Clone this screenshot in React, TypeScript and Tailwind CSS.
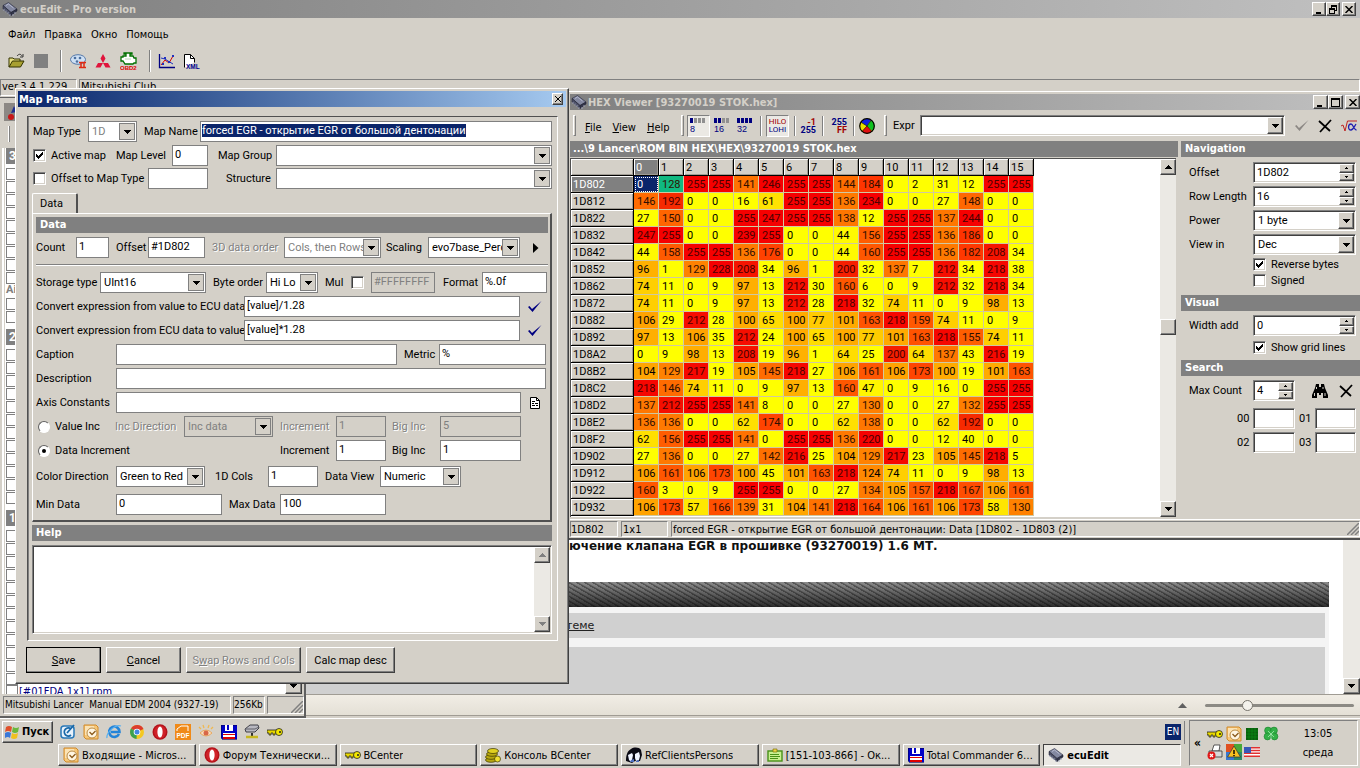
import { useEffect, useRef } from "react";
import type { ReactNode } from "react";

const raised =
  "border border-t-white border-l-white border-r-[#404040] border-b-[#404040] shadow-[inset_-1px_-1px_0_#808080] bg-[#d4d0c8]";
const sunken =
  "border border-t-[#808080] border-l-[#808080] border-r-white border-b-white shadow-[inset_1px_1px_0_#404040,inset_-1px_-1px_0_#d4d0c8] bg-white";
const cell =
  "border border-t-[#808080] border-l-[#808080] border-r-white border-b-white";
const tahoma = "font-['DejaVu_Sans_Condensed','DejaVu_Sans',sans-serif]";

/* ---------- small drawings ---------- */

function Down() {
  return (
    <svg width="7" height="4" viewBox="0 0 7 4" shapeRendering="crispEdges" aria-hidden="true">
      <path d="M0 0h7v1H0zM1 1h5v1H1zM2 2h3v1H2zM3 3h1v1H3z" />
    </svg>
  );
}

function Up() {
  return (
    <svg width="7" height="4" viewBox="0 0 7 4" shapeRendering="crispEdges" aria-hidden="true">
      <path d="M3 0h1v1H3zM2 1h3v1H2zM1 2h5v1H1zM0 3h7v1H0z" />
    </svg>
  );
}

function Chip() {
  return (
    <svg width="16" height="16" viewBox="0 0 16 16" aria-hidden="true">
      <path d="M1 4.500l5.500-3L15 8l-6 3.500z" fill="#8388a0" stroke="#26283c" strokeWidth=".6" />
      <path d="M1 4.500l8 7v3L1 8z" fill="#4c5068" stroke="#181a28" strokeWidth=".5" />
      <path d="M9 11.500L15 8v2l-6 4.500z" fill="#33364c" stroke="#181a28" strokeWidth=".5" />
      <path d="M2 8v2M4 9.500v2M6 11v2M8 13v2M11 13v2M13 11v2" stroke="#a4a8c0" strokeWidth=".9" />
      <path d="M4 4.500l2.500-1.500 5 4" fill="none" stroke="#c0c4d8" strokeWidth=".8" />
    </svg>
  );
}

function Floppy() {
  return (
    <svg width="16" height="16" viewBox="0 0 16 16" shapeRendering="crispEdges" aria-hidden="true">
      <path d="M0 1h16v14H1l-1-1z" fill="#0000c8" stroke="#000060" strokeWidth=".6" />
      <path d="M4 1h8v6H4z" fill="#fff" />
      <path d="M6 1h2v5H6z" fill="#0000c8" />
      <path d="M2 9h12v5H2z" fill="#fff" />
      <path d="M2 10h12v1H2zM2 13h12v2H2z" fill="#e00000" />
    </svg>
  );
}

function KeyIcon() {
  return (
    <svg width="16" height="16" viewBox="0 0 16 16" aria-hidden="true">
      <path d="M0 6h10v3H8v2H6V9H4v2H2V9H0z" fill="#e8d800" stroke="#222" strokeWidth=".8" />
      <circle cx="12" cy="8" r="3.500" fill="#f4e800" stroke="#222" strokeWidth=".8" />
      <circle cx="13" cy="8" r="1" fill="#222" />
    </svg>
  );
}

function OperaIcon() {
  return (
    <svg width="16" height="16" viewBox="0 0 16 16" aria-hidden="true">
      <ellipse cx="8" cy="8" rx="7.500" ry="7.800" fill="#b3121a" />
      <ellipse cx="8" cy="8" rx="6" ry="6.500" fill="#d02228" />
      <ellipse cx="8" cy="8" rx="2.600" ry="5.600" fill="#fff" />
    </svg>
  );
}

function OutlookIcon() {
  return (
    <svg width="16" height="16" viewBox="0 0 16 16" aria-hidden="true">
      <path d="M1 1h12l2 2v12H3l-2-2z" fill="#f6c778" stroke="#d18a2a" />
      <path d="M2 2h9v9H2z" fill="#fbe3b5" />
      <circle cx="9" cy="9" r="5" fill="#fff6e2" stroke="#b98a45" />
      <path d="M6.500 8l2.500 2.500L12.500 7" fill="none" stroke="#8a5a1c" strokeWidth="1.300" />
    </svg>
  );
}

function CheckTick({ color }: { color: string }) {
  return (
    <svg width="16" height="14" viewBox="0 0 16 14" aria-hidden="true">
      <path d="M1 7l1.500-1L5 9 14.500 1 5.500 12z" fill={color} />
    </svg>
  );
}

function Cross() {
  return (
    <svg width="14" height="14" viewBox="0 0 14 14" aria-hidden="true">
      <path d="M1 2l11 10M13 1L2 13" stroke="#000" strokeWidth="1.800" fill="none" />
    </svg>
  );
}

/* ---------- controls ---------- */

function Label({ w, id, off, children }: { w: string; id?: string; off?: boolean; children: ReactNode }) {
  return (
    <label
      htmlFor={id}
      className={`${w} shrink-0 whitespace-nowrap ${off ? "text-[#808080] [text-shadow:1px_1px_0_white]" : ""}`}
    >
      {children}
    </label>
  );
}

function Field({ w, id, value = "", off }: { w: string; id: string; value?: string; off?: boolean }) {
  return (
    <input
      id={id}
      defaultValue={value}
      disabled={off}
      aria-label={id}
      className={`${w} h-[21px] min-w-0 rounded-none border border-[#808080] pb-[3px] pl-[2px] outline-none ${
        off ? "bg-[#d4d0c8] text-[#808080]" : "bg-white"
      }`}
    />
  );
}

function Combo({ w, id, value = "", off, grey }: { w: string; id: string; value?: string; off?: boolean; grey?: boolean }) {
  return (
    <span className={`${w} flex h-[21px] items-center border border-[#808080] pr-[1px] ${grey ? "bg-[#d4d0c8]" : "bg-white"}`}>
      <select
        id={id}
        aria-label={id}
        disabled={off}
        className={`h-full min-w-0 flex-1 appearance-none pl-[3px] opacity-100 outline-none ${off ? "text-[#808080]" : ""}`}
      >
        <option>{value}</option>
      </select>
      <span className="flex h-[17px] w-[16px] shrink-0 items-center justify-center border border-[#808080] bg-[#d4d0c8]">
        <Down />
      </span>
    </span>
  );
}

function Check({ id, on }: { id: string; on?: boolean }) {
  return (
    <span className="grid h-[13px] w-[13px] shrink-0 place-items-center">
      <input
        id={id}
        aria-label={id}
        type="checkbox"
        defaultChecked={on}
        className={`peer col-start-1 row-start-1 h-[13px] w-[13px] appearance-none ${sunken}`}
      />
      <svg
        className="pointer-events-none col-start-1 row-start-1 hidden peer-checked:block"
        width="7"
        height="7"
        viewBox="0 0 7 7"
        shapeRendering="crispEdges"
      >
        <path d="M0 2h1v3H0zM1 3h1v3H1zM2 4h1v3H2zM3 3h1v3H3zM4 2h1v3H4zM5 1h1v3H5zM6 0h1v3H6z" />
      </svg>
    </span>
  );
}

function Radio({ id, on }: { id: string; on?: boolean }) {
  return (
    <span className="ml-[2px] mr-[5px] grid h-[12px] w-[12px] shrink-0 place-items-center">
      <input
        id={id}
        type="radio"
        name="increment"
        defaultChecked={on}
        className="peer col-start-1 row-start-1 h-[12px] w-[12px] appearance-none rounded-full border border-b-white border-l-[#606060] border-r-white border-t-[#606060] bg-white"
      />
      <span className="pointer-events-none col-start-1 row-start-1 hidden h-[4px] w-[4px] rounded-full bg-black peer-checked:block" />
    </span>
  );
}

function Spinner({ id, value, w }: { id: string; value: string; w: string }) {
  return (
    <span className={`${w} ${sunken} flex h-[21px] min-w-0 p-[1px]`}>
      <input id={id} defaultValue={value} className="w-0 min-w-0 flex-1 pb-[1px] pl-[2px] outline-none" />
      <span className="flex w-[15px] shrink-0 flex-col">
        <button aria-label="Up" className={`flex flex-1 items-center justify-center ${raised}`}>
          <svg width="3" height="2" viewBox="0 0 3 2" shapeRendering="crispEdges"><path d="M1 0h1v1H1zM0 1h3v1H0z" /></svg>
        </button>
        <button aria-label="Down" className={`flex flex-1 items-center justify-center ${raised}`}>
          <svg width="3" height="2" viewBox="0 0 3 2" shapeRendering="crispEdges"><path d="M0 0h3v1H0zM1 1h1v1H1z" /></svg>
        </button>
      </span>
    </span>
  );
}

function DropDown({ id, value, w }: { id: string; value: string; w: string }) {
  return (
    <span className={`${w} ${sunken} flex h-[21px] min-w-0 p-[1px]`}>
      <select id={id} aria-label={id} className="min-w-0 flex-1 appearance-none pl-[3px] outline-none">
        <option>{value}</option>
      </select>
      <span className={`flex w-[16px] shrink-0 items-center justify-center ${raised}`}>
        <Down />
      </span>
    </span>
  );
}

function WindowButtons() {
  const b = `flex h-[14px] w-[15px] items-center justify-center ${raised}`;
  return (
    <div className="flex">
      <button aria-label="Minimize" className={b}>
        <svg width="9" height="9" viewBox="0 0 9 9" shapeRendering="crispEdges"><path d="M1 7h5v2H1z" /></svg>
      </button>
      <button aria-label="Maximize" className={b}>
        <svg width="9" height="9" viewBox="0 0 9 9" shapeRendering="crispEdges"><path d="M0 0h9v9H0zM1 2v6h7V2z" fillRule="evenodd" /></svg>
      </button>
      <button aria-label="Close" className={`${b} ml-[2px]`}>
        <svg width="8" height="7" viewBox="0 0 8 7"><path d="M.5 0l7 7M7.500 0l-7 7" stroke="#000" strokeWidth="1.500" /></svg>
      </button>
    </div>
  );
}

function RestoreButtons() {
  const b = `flex h-[14px] w-[14px] items-center justify-center ${raised}`;
  return (
    <div className="flex">
      <button aria-label="Minimize" className={b}>
        <svg width="9" height="9" viewBox="0 0 9 9" shapeRendering="crispEdges"><path d="M1 7h5v2H1z" /></svg>
      </button>
      <button aria-label="Restore" className={b}>
        <svg width="9" height="9" viewBox="0 0 9 9" shapeRendering="crispEdges">
          <path d="M2 0h6v6H6V5h1V2H3v1H2zM0 3h6v6H0zM1 5v3h4V5z" fillRule="evenodd" />
        </svg>
      </button>
      <button aria-label="Close" className={`${b} ml-[2px]`}>
        <svg width="8" height="7" viewBox="0 0 8 7"><path d="M.5 0l7 7M7.500 0l-7 7" stroke="#000" strokeWidth="1.500" /></svg>
      </button>
    </div>
  );
}

function Bar({ children, pad = "pl-[4px]" }: { children: ReactNode; pad?: string }) {
  return <h2 className={`h-[16px] bg-[#808080] text-[11px] font-bold leading-[16px] text-white ${pad} ${tahoma}`}>{children}</h2>;
}

/* ---------- main window ---------- */

function MainWindow() {
  const sep = "h-[22px] w-[2px] border-l border-[#808080] border-r border-r-white";
  return (
    <header className="h-[97px] shrink-0 overflow-hidden">
      <div className="flex h-[18px] items-center bg-linear-to-r from-[#808080] to-[#c0c0c0] pl-[2px] pr-[4px]">
        <Chip />
        <h1 className={`flex-1 pl-[2px] text-[11px] font-bold text-[#d4d0c8] ${tahoma}`}>ecuEdit - Pro version</h1>
        <RestoreButtons />
      </div>
      <nav className={`mt-[7px] flex h-[18px] items-center gap-[9px] pl-[8px] ${tahoma}`}>
        <button>Файл</button>
        <button>Правка</button>
        <button>Окно</button>
        <button>Помощь</button>
      </nav>
      <div className="mt-[5px] flex h-[26px] items-center pl-[8px]">
        <button aria-label="Open" className="w-[26px]">
          <svg width="17" height="16" viewBox="0 0 17 16">
            <path d="M1 14V5h4l1 1h6v3" fill="#e8e080" stroke="#333300" />
            <path d="M1 14l3.500-6H16l-3.500 6z" fill="#a8a030" stroke="#333300" />
            <path d="M9 3c2-2.500 4-2 5 0m1-2v3h-3" fill="none" stroke="#222" strokeWidth=".9" />
          </svg>
        </button>
        <button aria-label="Stop" className="h-[14px] w-[14px] bg-[#808080]" />
        <span className={`ml-[12px] ${sep}`} />
        <button aria-label="ECU" className="ml-[8px] w-[25px]">
          <svg width="17" height="16" viewBox="0 0 17 16">
            <ellipse cx="8" cy="6.500" rx="7.500" ry="4.800" fill="#cfe0f4" stroke="#5478a8" />
            <circle cx="5" cy="5" r="1.300" fill="#4a6ea0" /><circle cx="10" cy="5" r="1.300" fill="#4a6ea0" /><circle cx="7" cy="8.500" r="1.300" fill="#4a6ea0" />
            <path d="M9 9.500h7M9 14.500h7M11 9.500v5M14 9.500v5" stroke="#e02810" strokeWidth="1.500" />
          </svg>
        </button>
        <button aria-label="Mitsubishi" className="w-[25px]">
          <svg width="16" height="16" viewBox="0 0 16 16">
            <path d="M8 1l2.500 4.500L8 10 5.500 5.500zM8 10l-2.500 4.500H.500L3 10zM8 10l2.500 4.500h5L13 10z" fill="#e0143c" />
          </svg>
        </button>
        <button aria-label="OBD 2" className="w-[17px]">
          <svg width="17" height="18" viewBox="0 0 17 18">
            <path d="M3 4h3V2H4V1h8v1h-2v2h3l1 2h2v5h-2l-1 1H5L3 9H1V5h2z" fill="#fff" stroke="#007000" strokeWidth="1.300" />
            <path d="M5 7h6" stroke="#b8d8b8" />
            <text x="0" y="18" fontSize="6" fontWeight="bold" fill="#e00000" fontFamily="Liberation Sans">OBD2</text>
          </svg>
        </button>
        <span className={`ml-[12px] ${sep}`} />
        <button aria-label="Chart" className="ml-[7px] w-[25px]">
          <svg width="17" height="16" viewBox="0 0 17 16">
            <path d="M1.500 1v13.500H17" fill="none" stroke="#000080" strokeWidth="1.300" />
            <path d="M3 12l4-5 4 3 4-7" fill="none" stroke="#d00000" />
            <path d="M3 5l4 1 3 2 5 3" fill="none" stroke="#2030c0" />
            <path d="M6 4h2v2H6zM10 8h2v2h-2zM14 2h2v2h-2zM4 10h2v2H4z" fill="#2030c0" />
          </svg>
        </button>
        <button aria-label="XML">
          <svg width="17" height="17" viewBox="0 0 17 17">
            <path d="M1.500 14.500v-13h6l4 4v4" fill="#fff" stroke="#000" />
            <path d="M2 2h5v4h4v4H4v4H2z" fill="#fff" />
            <path d="M7.500 1.500v4h4" fill="none" stroke="#000" />
            <text x="3" y="16" fontSize="6.500" fontWeight="bold" fill="#000090" fontFamily="Liberation Sans">XML</text>
          </svg>
        </button>
      </div>
      <div className={`mt-[5px] flex h-[17px] gap-[2px] ${tahoma}`}>
        <span className={`${cell} w-[77px] pl-[1px]`}>ver.3.4.1.229</span>
        <span className={`${cell} flex-1 pl-[1px]`}>Mitsubishi Club</span>
      </div>
    </header>
  );
}

/* ---------- list of maps ---------- */

function Boxes({ n, from }: { n: number; from: string }) {
  return (
    <>
      {Array.from({ length: n }, (_, i) => (
        <div key={i} className="flex h-[13px] shrink-0 items-center">
          <input type="checkbox" aria-label={`${from} ${i + 1}`} className="h-[12px] w-[12px] appearance-none border border-[#808080] bg-white" />
        </div>
      ))}
    </>
  );
}

function ListHeader({ children }: { children: ReactNode }) {
  return <div className="mb-[3px] h-[16px] shrink-0 bg-[#808080] pl-[3px] text-[12px] font-bold leading-[16px] text-white">{children}</div>;
}

function ListWindow() {
  return (
    <section className="flex w-[306px] shrink-0 flex-col border-r-2 border-r-[#606060] border-b-2 border-b-[#606060] border-t border-t-[#606060] bg-[#d4d0c8]">
      <div className="ml-[4px] mt-[5px] flex h-[45px] flex-col">
        <button aria-label="Colors" className="h-[18px] w-[24px] bg-[#8c8884] pl-[3px] pt-[1px]">
          <svg width="16" height="16" viewBox="0 0 16 16">
            <path d="M7 1l3 6-6 1z" fill="#203090" />
            <circle cx="4" cy="12" r="3" fill="#c81818" />
          </svg>
        </button>
        <span className="ml-[4px] mt-[5px] h-[16px] w-[2px] border-l border-white border-r border-r-[#808080]" />
      </div>
      <div className="ml-[2px] mr-[2px] flex min-h-0 flex-1 basis-0 border-l-2 border-white">
        <div className="ml-[1px] flex min-h-0 flex-1 flex-col overflow-hidden bg-white pl-[1px]">
          <ListHeader>3</ListHeader>
          <Boxes n={9} from="Group 3" />
          <div className="h-[13px] shrink-0 text-[11px] font-bold leading-[12px] text-[#808080]">Ai</div>
          <Boxes n={2} from="Air" />
          <div className="h-[6px] shrink-0" />
          <ListHeader>2</ListHeader>
          <Boxes n={12} from="Group 2" />
          <div className="h-[6px] shrink-0" />
          <ListHeader>1</ListHeader>
          <Boxes n={12} from="Group 1" />
          <label className="flex h-[13px] shrink-0 items-start text-[#000080]">
            <input type="checkbox" className="h-[12px] w-[12px] appearance-none border border-[#808080] bg-white" />
            <span className={`pl-[1px] ${tahoma}`}>[#01FDA 1x1] rpm</span>
          </label>
        </div>
        <div className="flex w-[17px] flex-col justify-end bg-[#ebe9e4]">
          <button aria-label="Scroll down" className={`flex h-[16px] items-center justify-center ${raised}`}><Down /></button>
        </div>
      </div>
      <footer className={`mt-[2px] flex h-[20px] shrink-0 gap-[2px] pb-[2px] pl-[3px] text-[10px] leading-[16px] ${tahoma}`}>
        <span className={`${cell} w-[228px] whitespace-pre pl-[1px]`}>Mitsubishi Lancer  Manual EDM 2004 (9327-19)</span>
        <span className={`${cell} w-[32px]`}>256Kb</span>
        <span className={`${cell} flex flex-1 items-end justify-end`}>
          <svg width="12" height="12" viewBox="0 0 12 12"><path d="M0 12L12 0M4 12l8-8M8 12l4-4" stroke="#808080" strokeWidth="1.500" /></svg>
        </span>
      </footer>
    </section>
  );
}

/* ---------- browser behind ---------- */

function Browser() {
  return (
    <section className="flex min-w-0 flex-1 flex-col justify-end bg-[#d4d0c8]">
      <div className="flex h-[154px] bg-white">
        <div className="flex min-w-0 flex-1 flex-col">
          <h2 className="h-[42px] pl-[263px] text-[12px] font-bold leading-[13px] text-[#111] font-['DejaVu_Sans',sans-serif]">
            ючение клапана EGR в прошивке (93270019) 1.6 МТ.
          </h2>
          <div className="mr-[14px] h-[25px] bg-[repeating-linear-gradient(30deg,rgba(0,0,0,.35)_0px,rgba(0,0,0,.35)_1px,transparent_2px,transparent_4px),linear-gradient(#8c8c8c,#2c2c2c)]" />
          <div className="mr-[14px] flex flex-1 flex-col gap-[9px] bg-[#f4f4f4] pr-[4px] pt-[6px]">
            <div className="h-[25px] bg-[#d0d0d0] pl-[260px] leading-[26px]">
              <a href="#theme" className="text-[11px] text-[#222] underline font-['DejaVu_Sans',sans-serif]">теме</a>
            </div>
            <div className="flex-1 bg-[#d0d0d0]" />
          </div>
        </div>
        <div className="flex w-[17px] flex-col justify-end bg-[#ebe9e4]">
          <button aria-label="Scroll down" className={`flex h-[16px] items-center justify-center ${raised}`}><Down /></button>
        </div>
      </div>
      <div className="flex h-[22px] items-center justify-end gap-[18px] border-y border-[#a09c94] bg-linear-to-b from-[#f1ede5] to-[#e4e0d6] pr-[6px]">
        <svg width="9" height="5" viewBox="0 0 9 5"><path d="M4.500 0L9 5H0z" fill="#606060" /></svg>
        <input
          type="range"
          aria-label="Zoom"
          defaultValue={27}
          className="h-[14px] w-[149px] appearance-none bg-transparent [&::-webkit-slider-runnable-track]:h-[3px] [&::-webkit-slider-runnable-track]:rounded [&::-webkit-slider-runnable-track]:bg-[#8c8a84] [&::-webkit-slider-thumb]:-mt-[4px] [&::-webkit-slider-thumb]:h-[11px] [&::-webkit-slider-thumb]:w-[11px] [&::-webkit-slider-thumb]:appearance-none [&::-webkit-slider-thumb]:rounded-full [&::-webkit-slider-thumb]:border [&::-webkit-slider-thumb]:border-[#77746c] [&::-webkit-slider-thumb]:bg-[#f4f2ec]"
        />
      </div>
      <div className="h-[2px]" />
    </section>
  );
}

/* ---------- Map Params dialog ---------- */

const row = "flex h-[21px] items-center";

function MapParams() {
  const name = useRef<HTMLInputElement>(null);
  useEffect(() => {
    name.current?.focus();
    name.current?.select();
  }, []);
  const btn = `h-[26px] ${raised}`;
  return (
    <section className={`absolute left-[15px] top-[88px] w-[554px] p-[2px] pb-[10px] ${raised}`}>
      <div className="flex h-[16px] items-center bg-linear-to-r from-[#0a246a] to-[#a6caf0] pl-[1px] pr-[3px]">
        <h2 className={`flex-1 text-[11px] font-bold text-white ${tahoma}`}>Map Params</h2>
        <button aria-label="Close" className={`flex h-[12px] w-[11px] items-center justify-center ${raised}`}>
          <svg width="6" height="6" viewBox="0 0 6 6"><path d="M0 0l6 6M6 0L0 6" stroke="#000" /></svg>
        </button>
      </div>
      <div className="ml-[9px] mr-[8px] mt-[9px] border border-b-white border-l-[#505050] border-r-white border-t-[#505050] pb-[6px] pl-[4px] pr-[5px] pt-[4px] shadow-[inset_1px_0_0_#808080]">
        <div className={`${row} pl-[1px]`}>
          <Label w="w-[55px]" id="map-type">Map Type</Label>
          <Combo w="w-[49px]" id="map-type" value="1D" off />
          <Label w="ml-[7px] w-[56px]" id="map-name">Map Name</Label>
          <input
            id="map-name"
            ref={name}
            defaultValue="forced EGR - открытие EGR от большой дентонации"
            className="h-[21px] min-w-0 flex-1 border border-[#808080] bg-white pb-[3px] pl-[1px] outline-none selection:bg-[#0a246a] selection:text-white"
          />
        </div>
        <div className={`${row} mt-[3px] pl-[1px]`}>
          <Check id="active-map" on />
          <Label w="ml-[5px] w-[65px]" id="active-map">Active map</Label>
          <Label w="w-[56px]" id="map-level">Map Level</Label>
          <Field w="w-[36px]" id="map-level" value="0" />
          <Label w="ml-[10px] w-[58px]" id="map-group">Map Group</Label>
          <Combo w="flex-1" id="map-group" />
        </div>
        <div className={`${row} mt-[2px] pl-[1px]`}>
          <Check id="offset-type" />
          <Label w="ml-[5px] w-[97px]" id="offset-type">Offset to Map Type</Label>
          <Field w="w-[60px]" id="offset-to" />
          <Label w="ml-[18px] w-[50px]" id="structure">Structure</Label>
          <Combo w="flex-1" id="structure" />
        </div>
        <div role="tablist" className="mt-[4px] flex">
          <button role="tab" aria-selected="true" className="h-[20px] w-[46px] rounded-t-[2px] border border-b-0 border-l-white border-r-2 border-r-[#505050] border-t-white pr-[6px]">
            Data
          </button>
        </div>
        <div className="border border-b-2 border-b-[#505050] border-l-white border-r-2 border-r-[#505050] border-t-white pb-[5px] pl-[3px] pr-[2px] pt-[3px]">
          <Bar>Data</Bar>
          <div className={`${row} mt-[4px]`}>
            <Label w="w-[40px]" id="count">Count</Label>
            <Field w="w-[33px]" id="count" value="1" />
            <Label w="ml-[7px] w-[32px]" id="offset">Offset</Label>
            <Field w="w-[57px]" id="offset" value="#1D802" />
            <Label w="ml-[7px] w-[72px]" id="order3d" off>3D data order</Label>
            <Combo w="w-[97px]" id="order3d" value="Cols, then Rows" off />
            <Label w="ml-[5px] w-[42px]" id="scaling">Scaling</Label>
            <Combo w="w-[92px]" id="scaling" value="evo7base_Percent" />
            <button aria-label="Open scaling" className="ml-[13px]">
              <svg width="6" height="10" viewBox="0 0 6 10"><path d="M0 0l5.500 5L0 10z" /></svg>
            </button>
          </div>
          <div className="mb-[6px] mt-[6px] h-[2px] border-b border-t border-b-white border-t-[#808080]" />
          <div className={row}>
            <Label w="w-[64px]" id="storage">Storage type</Label>
            <Combo w="w-[106px]" id="storage" value="UInt16" />
            <Label w="ml-[7px] w-[53px]" id="byte-order">Byte order</Label>
            <Combo w="w-[52px]" id="byte-order" value="Hi Lo" />
            <Label w="ml-[7px] w-[26px]" id="mul">Mul</Label>
            <Check id="mul" />
            <span className="w-[7px]" />
            <Field w="w-[64px]" id="mask" value="#FFFFFFFF" off />
            <Label w="ml-[8px] w-[39px]" id="format">Format</Label>
            <Field w="w-[65px]" id="format" value="%.0f" />
          </div>
          <div className={`${row} mt-[3px]`}>
            <Label w="w-[208px]" id="to-ecu">Convert expression from value to ECU data</Label>
            <Field w="w-[276px]" id="to-ecu" value="[value]/1.28" />
            <button aria-label="Check expression" className="ml-[7px]"><CheckTick color="#000080" /></button>
          </div>
          <div className={`${row} mt-[3px]`}>
            <Label w="w-[208px]" id="to-value">Convert expression from ECU data to value</Label>
            <Field w="w-[276px]" id="to-value" value="[value]*1.28" />
            <button aria-label="Check expression" className="ml-[7px]"><CheckTick color="#000080" /></button>
          </div>
          <div className={`${row} mt-[3px]`}>
            <Label w="w-[80px]" id="caption">Caption</Label>
            <Field w="w-[281px]" id="caption" />
            <Label w="ml-[7px] w-[35px]" id="metric">Metric</Label>
            <Field w="w-[107px]" id="metric" value="%" />
          </div>
          <div className={`${row} mt-[3px]`}>
            <Label w="w-[80px]" id="description">Description</Label>
            <Field w="w-[430px]" id="description" />
          </div>
          <div className={`${row} mt-[3px]`}>
            <Label w="w-[80px]" id="axis">Axis Constants</Label>
            <Field w="w-[405px]" id="axis" />
            <button aria-label="Edit constants" className="ml-[9px]">
              <svg width="11" height="12" viewBox="0 0 11 12">
                <path d="M.500.500h6l3 3v8h-9z" fill="#fff" stroke="#000" />
                <path d="M6.500.500v3h3M2 4.500h3M2 6.500h2m1 0h3M2 8.500h3m1 0h2" fill="none" stroke="#000" />
              </svg>
            </button>
          </div>
          <div className={`${row} mt-[3px]`}>
            <Radio id="value-inc" />
            <Label w="w-[60px]" id="value-inc">Value Inc</Label>
            <Label w="w-[69px]" id="inc-dir" off>Inc Direction</Label>
            <Combo w="w-[89px]" id="inc-dir" value="Inc data" off grey />
            <Label w="ml-[7px] w-[56px]" id="inc-a" off>Increment</Label>
            <Field w="w-[50px]" id="inc-a" value="1" off />
            <Label w="ml-[6px] w-[48px]" id="big-a" off>Big Inc</Label>
            <Field w="w-[81px]" id="big-a" value="5" off />
          </div>
          <div className={`${row} mt-[3px]`}>
            <Radio id="data-inc" on />
            <Label w="w-[225px]" id="data-inc">Data Increment</Label>
            <Label w="w-[56px]" id="inc-b">Increment</Label>
            <Field w="w-[50px]" id="inc-b" value="1" />
            <Label w="ml-[6px] w-[48px]" id="big-b">Big Inc</Label>
            <Field w="w-[81px]" id="big-b" value="1" />
          </div>
          <div className={`${row} mt-[5px]`}>
            <Label w="w-[80px]" id="color-dir">Color Direction</Label>
            <Combo w="w-[89px]" id="color-dir" value="Green to Red" />
            <Label w="ml-[10px] w-[53px]" id="cols">1D Cols</Label>
            <Field w="w-[50px]" id="cols" value="1" />
            <Label w="ml-[7px] w-[55px]" id="data-view">Data View</Label>
            <Combo w="w-[81px]" id="data-view" value="Numeric" />
          </div>
          <div className={`${row} mt-[7px]`}>
            <Label w="w-[80px]" id="min">Min Data</Label>
            <Field w="w-[106px]" id="min" value="0" />
            <Label w="ml-[7px] w-[51px]" id="max">Max Data</Label>
            <Field w="w-[106px]" id="max" value="100" />
          </div>
        </div>
        <div className="mt-[3px]"><Bar>Help</Bar></div>
        <div className={`${sunken} mt-[4px] flex h-[89px] p-[1px]`}>
          <textarea aria-label="Help" readOnly className="min-w-0 flex-1 resize-none outline-none" />
          <div className="flex w-[16px] flex-col justify-between bg-[#ebe9e4]">
            <button aria-label="Scroll up" disabled className={`flex h-[16px] items-center justify-center fill-[#808080] ${raised}`}><Up /></button>
            <button aria-label="Scroll down" disabled className={`flex h-[16px] items-center justify-center fill-[#808080] ${raised}`}><Down /></button>
          </div>
        </div>
      </div>
      <div className="ml-[8px] mt-[6px] flex gap-[5px]">
        <button className={`w-[75px] outline outline-1 -outline-offset-1 outline-black ${btn}`}><u>S</u>ave</button>
        <button className={`w-[75px] ${btn}`}><u>C</u>ancel</button>
        <button disabled className={`w-[115px] text-[#808080] [text-shadow:1px_1px_0_white] ${btn}`}>S<u>w</u>ap Rows and Cols</button>
        <button className={`w-[89px] ${btn}`}>Calc map desc</button>
      </div>
    </section>
  );
}

/* ---------- HEX viewer ---------- */

const hexRows: [string, number[]][] = [
  ["1D802", [0, 128, 255, 255, 141, 246, 255, 255, 144, 184, 0, 2, 31, 12, 255, 255]],
  ["1D812", [146, 192, 0, 0, 16, 61, 255, 255, 136, 234, 0, 0, 27, 148, 0, 0]],
  ["1D822", [27, 150, 0, 0, 255, 247, 255, 255, 138, 12, 255, 255, 137, 244, 0, 0]],
  ["1D832", [247, 255, 0, 0, 239, 255, 0, 0, 44, 156, 255, 255, 136, 186, 0, 0]],
  ["1D842", [44, 158, 255, 255, 136, 176, 0, 0, 44, 160, 255, 255, 136, 182, 208, 34]],
  ["1D852", [96, 1, 129, 228, 208, 34, 96, 1, 200, 32, 137, 7, 212, 34, 218, 38]],
  ["1D862", [74, 11, 0, 9, 97, 13, 212, 30, 160, 6, 0, 9, 212, 32, 218, 34]],
  ["1D872", [74, 11, 0, 9, 97, 13, 212, 28, 218, 32, 74, 11, 0, 9, 98, 13]],
  ["1D882", [106, 29, 212, 28, 100, 65, 100, 77, 101, 163, 218, 159, 74, 11, 0, 9]],
  ["1D892", [97, 13, 106, 35, 212, 24, 100, 65, 100, 77, 101, 163, 218, 155, 74, 11]],
  ["1D8A2", [0, 9, 98, 13, 208, 19, 96, 1, 64, 25, 200, 64, 137, 43, 216, 19]],
  ["1D8B2", [104, 129, 217, 19, 105, 145, 218, 27, 106, 161, 106, 173, 100, 19, 101, 163]],
  ["1D8C2", [218, 146, 74, 11, 0, 9, 97, 13, 160, 47, 0, 9, 16, 0, 255, 255]],
  ["1D8D2", [137, 212, 255, 255, 141, 8, 0, 0, 27, 130, 0, 0, 27, 132, 255, 255]],
  ["1D8E2", [136, 136, 0, 0, 62, 174, 0, 0, 62, 138, 0, 0, 62, 192, 0, 0]],
  ["1D8F2", [62, 156, 255, 255, 141, 0, 255, 255, 136, 220, 0, 0, 12, 40, 0, 0]],
  ["1D902", [27, 136, 0, 0, 27, 142, 216, 25, 104, 129, 217, 23, 105, 145, 218, 5]],
  ["1D912", [106, 161, 106, 173, 100, 45, 101, 163, 218, 124, 74, 11, 0, 9, 98, 13]],
  ["1D922", [160, 3, 0, 9, 255, 255, 0, 0, 27, 134, 105, 157, 218, 167, 106, 161]],
  ["1D932", [106, 173, 57, 166, 139, 31, 104, 141, 218, 164, 106, 161, 106, 173, 58, 130]],
];

function heat(v: number) {
  const g = Math.round(Math.max(0, Math.min(255, 255 - (v - 40) * 1.4)));
  return `rgb(${v > 190 ? 246 : 255}, ${g}, 0)`;
}

function HexTable() {
  const head = "h-[17px] border-b border-r border-black p-0 pl-[2px] text-left font-normal shadow-[inset_1px_1px_0_white,inset_-1px_-1px_0_#a09c94]";
  return (
    <table className="w-[463px] table-fixed border-separate border-spacing-0 text-[11px] leading-[15px]">
      <thead>
        <tr>
          <th className={`w-[63px] bg-[#d4d0c8] ${head}`} />
          {hexRows[0][1].map((_, i) => (
            <th key={i} className={`w-[25px] ${head} ${i === 0 ? "bg-[#808080] text-white" : "bg-[#d4d0c8]"}`}>{i}</th>
          ))}
        </tr>
      </thead>
      <tbody>
        {hexRows.map(([address, values], r) => (
          <tr key={address}>
            <th className={`${head} ${r === 0 ? "bg-[#808080] text-white" : "bg-[#d4d0c8]"}`}>{address}</th>
            {values.map((v, c) => {
              const selected = r === 0 && c === 0;
              const second = r === 0 && c === 1;
              return (
                <td
                  key={c}
                  className={`h-[17px] border-b border-r border-[#d0c8a0] p-0 pl-[3px] ${
                    selected ? "text-white outline-1 -outline-offset-2 outline-dotted outline-white" : v > 190 ? "text-[#4a0000]" : v > 125 ? "text-[#301000]" : "text-black"
                  }`}
                  style={{ backgroundColor: selected ? "#0a246a" : second ? "#10b880" : heat(v) }}
                >
                  {v}
                </td>
              );
            })}
          </tr>
        ))}
      </tbody>
    </table>
  );
}

function BitIcon({ on, label }: { on: number; label: string }) {
  return (
    <svg width="17" height="17" viewBox="0 0 17 17" shapeRendering="crispEdges">
      {[0, 1, 2, 3].map((i) => (
        <rect key={i} x={i * 4} y="1" width="3" height="5" fill={i < on ? "#000080" : "#909090"} />
      ))}
      <text x="0" y="15" fontSize="9" fill="#000080" fontFamily="Liberation Sans">{label}</text>
    </svg>
  );
}

function HexViewer() {
  const sep = "h-[20px] w-[2px] shrink-0 border-l border-[#808080] border-r border-r-white";
  const grip = "h-[21px] w-[3px] shrink-0 border border-b-[#808080] border-l-white border-r-[#808080] border-t-white";
  const pressed = `${cell} flex h-[22px] w-[23px] shrink-0 items-center justify-center bg-[#ebe9e4]`;
  const two = "flex shrink-0 flex-col text-right text-[9px] font-bold leading-[8px]";
  const lab = "w-[64px] shrink-0 whitespace-nowrap";
  return (
    <section className="absolute left-[568px] right-0 top-[91px] border-b-2 border-b-[#505050] border-t border-t-white bg-[#d4d0c8] pl-[2px]">
      <div className="mt-[2px] flex h-[16px] items-center overflow-hidden bg-linear-to-r from-[#808080] to-[#c0c0c0] pl-[1px]">
        <Chip />
        <h2 className={`flex-1 whitespace-nowrap pl-[1px] text-[11px] font-bold text-[#d4d0c8] ${tahoma}`}>HEX Viewer [93270019 STOK.hex]</h2>
        <WindowButtons />
      </div>
      <div className="flex h-[31px] items-center pr-[3px]">
        <span className={`ml-[3px] ${grip}`} />
        <nav className={`ml-[9px] flex w-[96px] gap-[11px] pt-[4px] ${tahoma}`}>
          <button><u>F</u>ile</button>
          <button><u>V</u>iew</button>
          <button><u>H</u>elp</button>
        </nav>
        <span className={grip} />
        <button aria-label="8 bit" className={`ml-[3px] ${pressed}`}><BitIcon on={1} label="8" /></button>
        <button aria-label="16 bit" className="ml-[4px]"><BitIcon on={2} label="16" /></button>
        <button aria-label="32 bit" className="ml-[6px]"><BitIcon on={4} label="32" /></button>
        <span className={`ml-[6px] ${sep}`} />
        <button className={`ml-[4px] ${pressed} flex-col text-[8px] leading-[8px]`}>
          <span className="text-[#a00000]">HILO</span>
          <span className="text-[#000080]">LOHI</span>
        </button>
        <span className={`ml-[5px] ${sep}`} />
        <button className={`ml-[4px] w-[16px] ${two}`}><span className="text-[#a00000]">-1</span><span className="text-[#000080]">255</span></button>
        <span className={`ml-[6px] ${sep}`} />
        <button className={`ml-[7px] w-[16px] ${two}`}><span className="text-[#000080]">255</span><span className="text-[#a00000]">FF</span></button>
        <span className={`ml-[6px] ${sep}`} />
        <button aria-label="Colors" className="ml-[4px]">
          <svg width="16" height="16" viewBox="0 0 16 16">
            <circle cx="8" cy="8" r="7.500" fill="#e8e000" />
            <path d="M8 8L2 4a7.200 7.200 0 0 1 10-2z" fill="#1020e0" />
            <path d="M8 8l4.500-6a7.200 7.200 0 0 1 1 11z" fill="#10c020" />
            <path d="M8 8l5 5.500a7.200 7.200 0 0 1-10 0z" fill="#e01010" />
            <path d="M8 8L1.500 4M8 8l4.500-6M8 8l5 5.500M8 8l-5 5.500" stroke="#000" strokeWidth=".6" />
            <circle cx="8" cy="8" r="7.300" fill="none" stroke="#000" strokeWidth="1.200" />
          </svg>
        </button>
        <span className={`ml-[9px] ${grip}`} />
        <Label w="ml-[6px] w-[27px]" id="expr">Expr</Label>
        <DropDown w="flex-1" id="expr" value="" />
        <button aria-label="Apply" className="ml-[9px]"><CheckTick color="#8c8884" /></button>
        <button aria-label="Clear" className="ml-[8px]"><Cross /></button>
        <button aria-label="Formula" className="ml-[9px]">
          <svg width="16" height="12" viewBox="0 0 16 12">
            <path d="M0 6l2-1 2 6L6.500 1H16" fill="none" stroke="#c02020" />
            <path d="M15 4c-2 3-3 6-5 6-3.500 0-3-6 0-6 2 0 3 6 5.500 6" fill="none" stroke="#2020b0" strokeWidth="1.300" />
          </svg>
        </button>
      </div>
      <div className="flex">
        <div className="min-w-0 flex-1">
          <Bar pad="pl-[3px]">...\9 Lancer\ROM BIN HEX\HEX\93270019 STOK.hex</Bar>
          <div className="mr-[2px] mt-[1px] flex h-[359px] border-l border-t border-[#505050] bg-white">
            <div className="flex-1"><HexTable /></div>
            <div className="flex w-[16px] flex-col bg-[#ebe9e4]">
              <button aria-label="Scroll up" className={`flex h-[16px] items-center justify-center ${raised}`}><Up /></button>
              <div className="flex-1" />
              <div className={`h-[16px] ${raised}`} />
              <div className="h-[166px]" />
              <button aria-label="Scroll down" className={`flex h-[16px] items-center justify-center ${raised}`}><Down /></button>
            </div>
          </div>
        </div>
        <aside className="ml-[3px] w-[179px] shrink-0">
          <Bar>Navigation</Bar>
          <div className="flex flex-col gap-[3px] pb-[8px] pl-[8px] pr-[4px] pt-[5px]">
            <div className={row}><label htmlFor="nav-offset" className={lab}>Offset</label><Spinner w="flex-1" id="nav-offset" value="1D802" /></div>
            <div className={row}><label htmlFor="row-length" className={lab}>Row Length</label><Spinner w="flex-1" id="row-length" value="16" /></div>
            <div className={row}><label htmlFor="power" className={lab}>Power</label><DropDown w="flex-1" id="power" value="1 byte" /></div>
            <div className={row}><label htmlFor="view-in" className={lab}>View in</label><DropDown w="flex-1" id="view-in" value="Dec" /></div>
            <div className="flex h-[13px] items-center gap-[5px] pl-[64px]"><Check id="reverse" on /><label htmlFor="reverse">Reverse bytes</label></div>
            <div className="flex h-[13px] items-center gap-[5px] pl-[64px]"><Check id="signed" /><label htmlFor="signed">Signed</label></div>
          </div>
          <Bar>Visual</Bar>
          <div className="flex flex-col gap-[5px] pb-[6px] pl-[8px] pr-[4px] pt-[4px]">
            <div className={row}><label htmlFor="width-add" className={lab}>Width add</label><Spinner w="flex-1" id="width-add" value="0" /></div>
            <div className="flex h-[13px] items-center gap-[5px] pl-[64px]"><Check id="grid-lines" on /><label htmlFor="grid-lines">Show grid lines</label></div>
          </div>
          <Bar>Search</Bar>
          <div className="pl-[8px] pr-[4px] pt-[4px]">
            <div className={row}>
              <label htmlFor="max-count" className={lab}>Max Count</label>
              <Spinner w="w-[42px]" id="max-count" value="4" />
              <button aria-label="Find" className="ml-[17px]">
                <svg width="16" height="14" viewBox="0 0 16 14">
                  <path d="M4 0h3v3h2V0h3l1 4 3 7v3h-5V9H9v2H7V9H5v5H0v-3l3-7z" />
                  <path d="M4.500 3v2M11 3v2M2.500 9v3M13 9v3" stroke="#d4d0c8" />
                </svg>
              </button>
              <button aria-label="Clear search" className="ml-[11px]"><Cross /></button>
            </div>
            {[["00", "01"], ["02", "03"]].map(([a, b], i) => (
              <div key={a} className={`${row} ${i === 0 ? "mt-[7px]" : "mt-[3px]"}`}>
                <label htmlFor={`byte-${a}`} className="w-[64px] pl-[48px]">{a}</label>
                <input id={`byte-${a}`} className={`h-[21px] w-[42px] ${sunken}`} />
                <label htmlFor={`byte-${b}`} className="w-[20px] pl-[4px]">{b}</label>
                <input id={`byte-${b}`} className={`h-[21px] w-0 min-w-0 flex-1 ${sunken}`} />
              </div>
            ))}
          </div>
        </aside>
      </div>
      <footer className={`mt-[2px] flex h-[19px] gap-[3px] border-t border-white pb-[1px] pt-[1px] leading-[15px] ${tahoma}`}>
        <span className={`${cell} w-[48px]`}>1D802</span>
        <span className={`${cell} w-[47px] pl-[1px]`}>1x1</span>
        <span className={`${cell} flex flex-1 items-center justify-between pl-[1px]`}>
          <span className="truncate">forced EGR - открытие EGR от большой дентонации: Data [1D802 - 1D803 (2)]</span>
          <svg width="12" height="12" viewBox="0 0 12 12"><path d="M0 12L12 0M4 12l8-8M8 12l4-4" stroke="#808080" strokeWidth="1.500" /></svg>
        </span>
      </footer>
    </section>
  );
}

/* ---------- taskbar ---------- */

function Quick({ label, children }: { label: string; children: ReactNode }) {
  return <button aria-label={label} className="h-[16px] w-[16px]">{children}</button>;
}

function Task({ icon, children, active }: { icon: ReactNode; children: ReactNode; active?: boolean }) {
  return (
    <button
      className={`flex h-[22px] min-w-0 flex-1 items-center gap-[3px] px-[4px] text-left ${
        active ? "border border-b-white border-l-[#404040] border-r-white border-t-[#404040] bg-[#ebe9e4] font-bold" : raised
      }`}
    >
      <span className="shrink-0">{icon}</span>
      <span className="truncate">{children}</span>
    </button>
  );
}

function Taskbar() {
  return (
    <footer className={`flex h-[50px] shrink-0 border-t border-white bg-[#d4d0c8] ${tahoma}`}>
      <div className="flex min-w-0 flex-1 flex-col">
        <div className="flex h-[24px] items-center pl-[2px] pr-[3px] pt-[1px]">
          <button className={`flex h-[22px] w-[51px] items-center gap-[2px] pl-[2px] font-bold ${raised}`}>
            <svg width="15" height="14" viewBox="0 0 15 14">
              <path d="M1 2q3-2 6 0L6 7q-3-2-6 0z" fill="#e0502a" />
              <path d="M8 2q3 2 6 0l-1 5q-3 2-6 0z" fill="#6ab83c" />
              <path d="M0 8q3-2 6 0l-1 5q-2-2-5 0z" fill="#3a78d8" />
              <path d="M7 8q3 2 6 0l-1 5q-3 2-6 0z" fill="#f0c020" />
            </svg>
            Пуск
          </button>
          <div className="ml-[7px] flex flex-1 gap-[7px]">
            <Quick label="Desktop">
              <svg width="16" height="16" viewBox="0 0 16 16"><rect x="1" y="2" width="13" height="12" rx="3" fill="#e8f2fc" stroke="#2878b8" strokeWidth="1.500" /><path d="M11 5a4 4 0 1 0 0 6M7 9l7-8" fill="none" stroke="#1868a8" strokeWidth="1.800" /></svg>
            </Quick>
            <Quick label="Outlook"><OutlookIcon /></Quick>
            <Quick label="Internet Explorer">
              <svg width="16" height="16" viewBox="0 0 16 16"><path d="M13 10a5.200 5.200 0 1 1 .5-2H5" fill="none" stroke="#2484d8" strokeWidth="2.600" /><path d="M1 14C0 9 9 0 15 2" fill="none" stroke="#58b0f0" strokeWidth="1.300" /></svg>
            </Quick>
            <Quick label="Chrome">
              <svg width="16" height="16" viewBox="0 0 16 16"><circle cx="8" cy="8" r="7" fill="#f4c820" /><path d="M8 8L2 4.500A7 7 0 0 1 14.500 5z" fill="#dc3c2c" /><path d="M8 8l-6-3.500A7 7 0 0 0 7.500 15z" fill="#3ca050" /><circle cx="8" cy="8" r="3.300" fill="#fff" /><circle cx="8" cy="8" r="2.500" fill="#4488e0" /></svg>
            </Quick>
            <Quick label="Opera"><OperaIcon /></Quick>
            <Quick label="PDF">
              <svg width="16" height="16" viewBox="0 0 16 16"><path d="M0 0h16v16H0z" fill="#f08a18" /><path d="M2 7V5l4-3h7v5" fill="none" stroke="#fff" /><text x="1.500" y="14" fontSize="6.500" fontWeight="bold" fill="#fff" fontFamily="Liberation Sans">PDF</text></svg>
            </Quick>
            <Quick label="Viewer">
              <svg width="16" height="16" viewBox="0 0 16 16"><path d="M2 9q6-6 12 0-6 6-12 0z" fill="#f8e0c0" stroke="#e8a860" /><circle cx="8" cy="9" r="2.500" fill="#d86848" /><path d="M3 5L1 3M6 4L5 1M10 4l1-3M13 5l2-2" stroke="#f0b850" strokeWidth="1.300" /></svg>
            </Quick>
            <Quick label="Total Commander"><Floppy /></Quick>
            <Quick label="Network drive">
              <svg width="16" height="16" viewBox="0 0 16 16"><path d="M1 5l5-4h8l1 3-4 4H2z" fill="#b8b8c0" stroke="#404048" /><path d="M1 5h10l4-2" fill="none" stroke="#606068" /><path d="M8 9v4" stroke="#303030" strokeWidth="2" /><path d="M2 13h12" stroke="#c8b820" strokeWidth="2.500" /></svg>
            </Quick>
            <Quick label="BCenter"><KeyIcon /></Quick>
          </div>
          <span className="flex h-[16px] w-[16px] items-center justify-center bg-[#0a246a] text-[10px] text-white">EN</span>
        </div>
        <div className="mt-[1px] flex gap-[3px] pl-[58px] pr-[3px]">
          <Task icon={<OutlookIcon />}>Входящие - Micros...</Task>
          <Task icon={<OperaIcon />}>Форум Технически...</Task>
          <Task icon={<KeyIcon />}>BCenter</Task>
          <Task
            icon={
              <svg width="16" height="16" viewBox="0 0 16 16"><g fill="#b8a810" stroke="#3c3800" strokeWidth=".7"><ellipse cx="6" cy="13" rx="5.500" ry="2.300" /><ellipse cx="6" cy="10" rx="5.500" ry="2.300" /><ellipse cx="7" cy="7" rx="5.500" ry="2.300" /><ellipse cx="8" cy="4" rx="5.500" ry="2.500" fill="#e0d020" /><circle cx="12.500" cy="12" r="3" fill="#f0e030" /></g></svg>
            }
          >
            Консоль BCenter
          </Task>
          <Task
            icon={
              <svg width="16" height="16" viewBox="0 0 16 16">
                <path d="M0 14C0 9 1 4 5 2c3-2 8-2 10 1l1 5-2 6H9l-3 2z" fill="#0a0a14" />
                <path d="M2 8l4-2 1 2-1 5-1 2-2-2zM9 7l4-2 1 4-1 4-3 1-1-3z" fill="#f0f4ff" />
                <path d="M5 13l3-1v3H4zM10 14l3-1v2h-3z" fill="#5070c0" />
              </svg>
            }
          >
            RefClientsPersons
          </Task>
          <Task
            icon={
              <svg width="16" height="16" viewBox="0 0 16 16"><rect x="1" y="4" width="14" height="10" fill="#c8f090" stroke="#489018" strokeWidth="1.400" /><path d="M6 2h4v3H6z" fill="#e8d840" stroke="#807010" strokeWidth=".7" /><path d="M3 7.500h9M3 9.500h10M3 11.500h8" stroke="#489018" /></svg>
            }
          >
            [151-103-866] - Ок...
          </Task>
          <Task icon={<Floppy />}>Total Commander 6....</Task>
          <Task icon={<Chip />} active>ecuEdit</Task>
        </div>
      </div>
      <div className="mr-[4px] mt-[2px] h-[23px] border-l border-[#808080]" />
      <div className={`${cell} mb-[2px] mr-[2px] mt-[1px] flex w-[169px] items-center pl-[4px]`}>
        <button aria-label="Show hidden icons" className="w-[13px] text-left text-[12px] font-bold">«</button>
        <div className="grid w-[72px] grid-cols-4 gap-x-[2px] gap-y-[2px]">
          <KeyIcon />
          <OutlookIcon />
          <svg width="16" height="16" viewBox="0 0 16 16"><path d="M2 2h12v12H2z" fill="#08600c" /><path d="M2 5h12M2 8h12M2 11h12M5 2v12M8 2v12M11 2v12" stroke="#0c9018" strokeWidth=".6" /></svg>
          <svg width="16" height="16" viewBox="0 0 16 16"><g fill="#34b048" stroke="#168028" strokeWidth=".6"><circle cx="5" cy="4.500" r="3.400" /><circle cx="11" cy="4.500" r="3.400" /><circle cx="4.500" cy="10.500" r="3.400" /><circle cx="11.500" cy="10.500" r="3.400" /></g><circle cx="8" cy="7.500" r="2.500" fill="#34b048" /><path d="M5 5l6 6M11 5l-6 6M8 8v7" stroke="#b8f0c0" strokeWidth=".7" /></svg>
          <svg width="16" height="16" viewBox="0 0 16 16"><path d="M5 7l2-6h6l-1 6z" fill="#fff" stroke="#333" strokeWidth=".8" /><path d="M2 7h13v6H2z" fill="#d8d8d8" stroke="#333" strokeWidth=".8" /><circle cx="4.500" cy="11.500" r="4" fill="#e01818" /><path d="M3 10l3 3M6 10l-3 3" stroke="#fff" strokeWidth="1.200" /></svg>
          <svg width="16" height="16" viewBox="0 0 16 16"><path d="M0 0h8v8H0z" fill="#e05020" /><path d="M8 0h8v8H8z" fill="#48a838" /><path d="M0 8h8v8H0z" fill="#3878d0" /><path d="M8 8h8v8H8z" fill="#2c8868" /><path d="M8 2l6.500 11h-13z" fill="#f8c020" stroke="#333" strokeWidth=".7" /><path d="M8 6v4M8 11v1.200" stroke="#000" strokeWidth="1.400" /></svg>
          <svg width="16" height="16" viewBox="0 0 16 16"><path d="M0 3h16v10H0z" fill="#fff" /><path d="M0 3.700h16M0 6.500h16M0 9.300h16M0 12.200h16" stroke="#e03030" strokeWidth="1.400" /><path d="M0 3h7v6H0z" fill="#3858b8" /></svg>
        </div>
        <div className="flex flex-1 flex-col items-center gap-[6px] leading-[13px]">
          <time>13:05</time>
          <span>среда</span>
        </div>
      </div>
    </footer>
  );
}

export default function App() {
  return (
    <div className="relative flex h-screen flex-col overflow-hidden bg-[#d4d0c8] text-[11px] leading-[13px] text-black font-[Roboto,'Liberation_Sans',sans-serif]">
      <MainWindow />
      <main className="flex min-h-0 flex-1">
        <ListWindow />
        <Browser />
      </main>
      <HexViewer />
      <MapParams />
      <Taskbar />
    </div>
  );
}
